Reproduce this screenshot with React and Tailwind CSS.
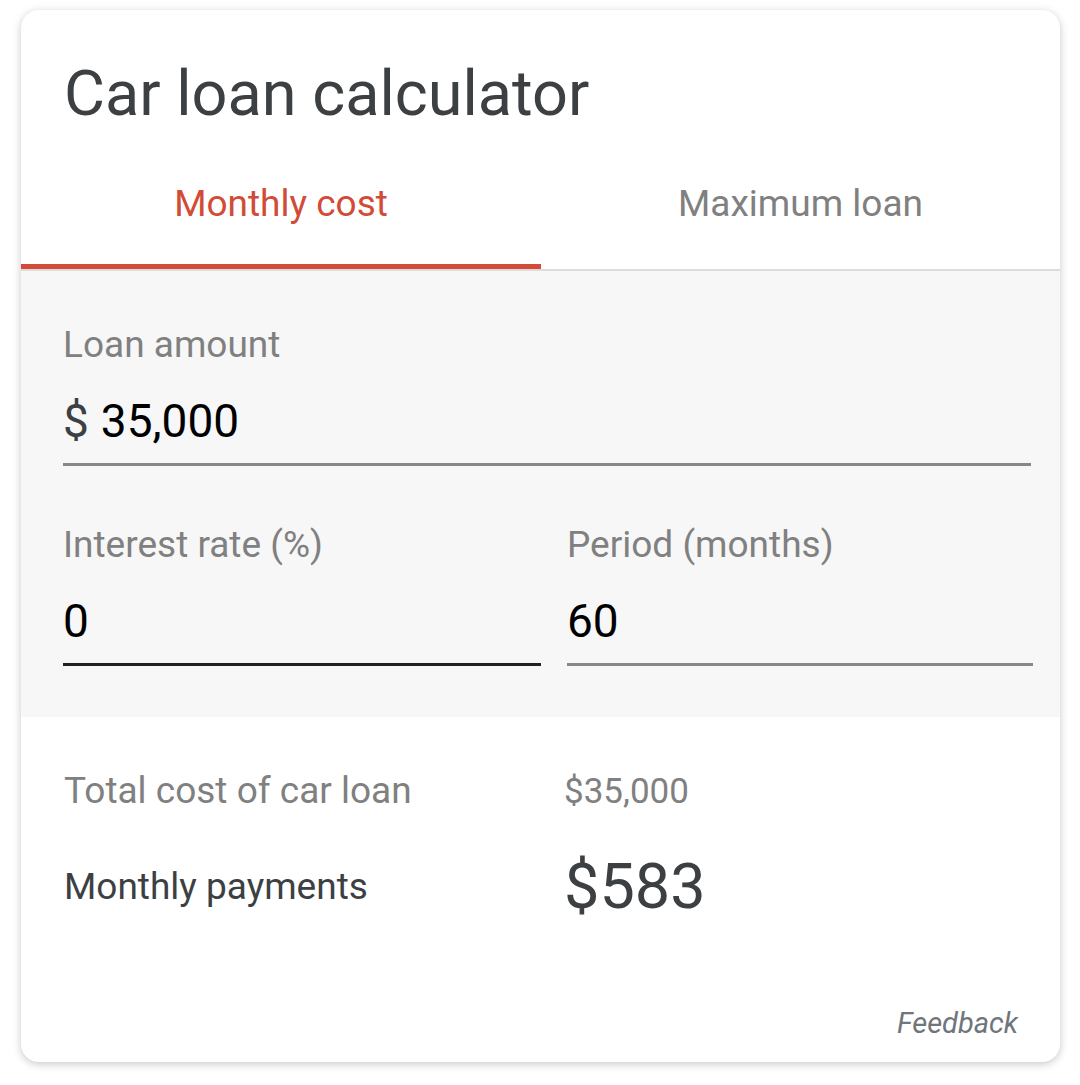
import React from "react";

const Field = ({ label, value, prefix, active, className }) => (
  <div className={className}>
    <div className="text-[37px] leading-none text-[#808080]">{label}</div>
    <div className="mt-[35px] flex items-baseline text-[46px] leading-none text-black">
      {prefix && <span className="mr-[12px] text-[#3c4043]">{prefix}</span>}
      <span>{value}</span>
    </div>
    <div
      className={
        active
          ? "mt-[19px] h-[3px] bg-[#202124]"
          : "mt-[19px] h-[3px] bg-[#878787]"
      }
    />
  </div>
);

export default function App() {
  return (
    <div
      className="w-[1080px] h-[1085px] bg-white pt-[10px] pl-[21px]"
      style={{ fontFamily: "Roboto, 'Noto Sans', sans-serif" }}
    >
      <div className="w-[1039px] h-[1052px] rounded-[18px] bg-white shadow-[0_2px_8px_rgba(0,0,0,0.22)] overflow-hidden flex flex-col">
        {/* Title */}
        <div className="pl-[43px] pt-[52px] text-[63px] leading-none text-[#3c4043]">
          Car loan calculator
        </div>

        {/* Tabs */}
        <div className="mt-[60px] flex border-b-[2px] border-[#dcdcdc]">
          <div className="w-[520px] flex flex-col items-center">
            <div className="h-[79px] text-[37px] leading-none text-[#d14b36]">
              Monthly cost
            </div>
            <div className="h-[5px] w-full bg-[#d14b36]" />
          </div>
          <div className="flex-1 flex flex-col items-center">
            <div className="h-[79px] text-[37px] leading-none text-[#808080]">
              Maximum loan
            </div>
            <div className="h-[5px] w-full" />
          </div>
        </div>

        {/* Inputs */}
        <div className="bg-[#f7f7f7] h-[446px] pl-[42px] pr-[27px] pt-[55px]">
          <Field label="Loan amount" value="35,000" prefix="$" className="mr-[2px]" />
          <div className="mt-[60px] flex gap-[26px]">
            <Field
              className="w-[478px]"
              label="Interest rate (%)"
              value="0"
              active
            />
            <Field className="flex-1" label="Period (months)" value="60" />
          </div>
        </div>

        {/* Results */}
        <div className="flex-1 flex flex-col pl-[43px] pr-[42px] pt-[55px] pb-[24px]">
          <div className="flex items-baseline">
            <div className="w-[500px] text-[37px] leading-none text-[#808080]">
              Total cost of car loan
            </div>
            <div className="text-[35px] leading-none text-[#808080]">
              $35,000
            </div>
          </div>
          <div className="mt-[46px] flex items-center">
            <div className="w-[500px] text-[37px] leading-none text-[#3c4043]">
              Monthly payments
            </div>
            <div className="text-[63px] leading-none text-[#3c4043]">$583</div>
          </div>
          <div className="mt-auto self-end text-[29px] italic leading-none text-[#70757a]">
            Feedback
          </div>
        </div>
      </div>
    </div>
  );
}
